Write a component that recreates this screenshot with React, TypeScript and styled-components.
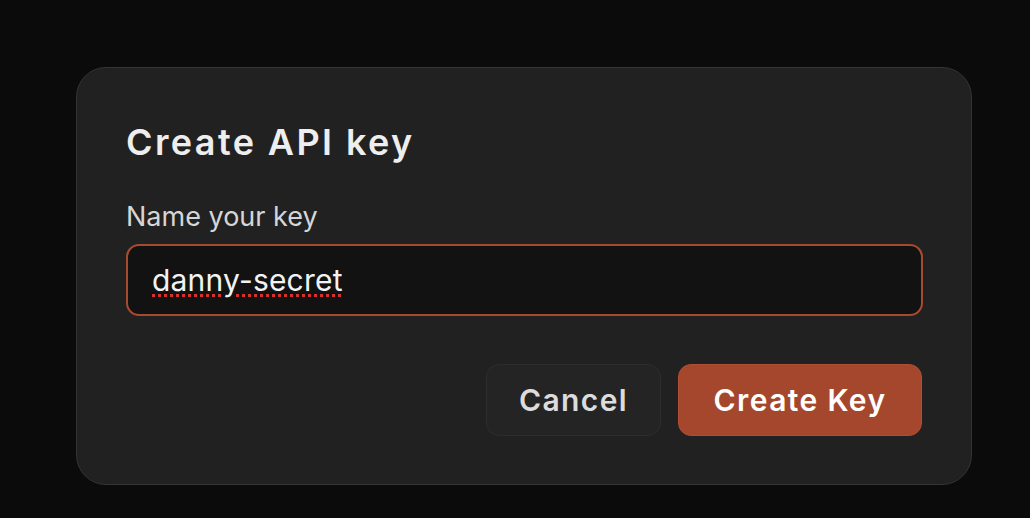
import React from "react";
import styled, { createGlobalStyle } from "styled-components";

const Global = createGlobalStyle`
  html, body { margin: 0; padding: 0; background: #0b0b0b; }
  body { width: 1030px; height: 518px; overflow: hidden; font-family: Inter, "Noto Sans", sans-serif; }
`;

const Page = styled.div`
  width: 1030px;
  height: 518px;
  box-sizing: border-box;
  padding: 67px 58px 0 76px;
`;

const Card = styled.div`
  box-sizing: border-box;
  width: 896px;
  height: 418px;
  background: #212121;
  border: 1px solid #343434;
  border-radius: 30px;
  padding: 52px 49px 0 49px;
  display: flex;
  flex-direction: column;
`;

const Title = styled.h1`
  margin: 0;
  font-family: Inter, sans-serif;
  font-weight: 600;
  font-size: 36px;
  line-height: 44px;
  color: #eeeeee;
  letter-spacing: 2.4px;
`;

const Label = styled.label`
  margin-top: 36px;
  font-family: Inter, sans-serif;
  font-size: 27px;
  line-height: 34px;
  color: #d6d6d6;
`;

const Input = styled.input`
  margin-top: 10px;
  box-sizing: border-box;
  width: 797px;
  height: 72px;
  background: #121212;
  border: 2px solid #a84a2e;
  border-radius: 13px;
  padding: 0 24px;
  font-family: Inter, sans-serif;
  font-size: 30px;
  letter-spacing: 0.2px;
  color: #f2f2f2;
  outline: none;
  text-decoration-line: underline;
  text-decoration-style: dotted;
  text-decoration-color: #d8302c;
  text-decoration-thickness: 3px;
  text-underline-offset: 3px;
`;

const Actions = styled.div`
  margin-top: 48px;
  display: flex;
  justify-content: flex-end;
  gap: 17px;
`;

const Button = styled.button<{ $primary?: boolean }>`
  box-sizing: border-box;
  height: 72px;
  padding: 0 ${(p) => (p.$primary ? "34.5px" : "32px")};
  border-radius: 13px;
  border: 1px solid ${(p) => (p.$primary ? "#b04f33" : "#2d2d2d")};
  background: ${(p) => (p.$primary ? "#a5472d" : "#242424")};
  color: ${(p) => (p.$primary ? "#ffffff" : "#dcdcdc")};
  font-family: Inter, sans-serif;
  font-weight: 600;
  font-size: 30px;
  letter-spacing: 1.4px;
  cursor: pointer;
`;

export default function App() {
  return (
    <>
      <Global />
      <Page>
        <Card>
          <Title>Create API key</Title>
          <Label>Name your key</Label>
          <Input defaultValue="danny-secret" spellCheck={false} />
          <Actions>
            <Button>Cancel</Button>
            <Button $primary>Create Key</Button>
          </Actions>
        </Card>
      </Page>
    </>
  );
}
